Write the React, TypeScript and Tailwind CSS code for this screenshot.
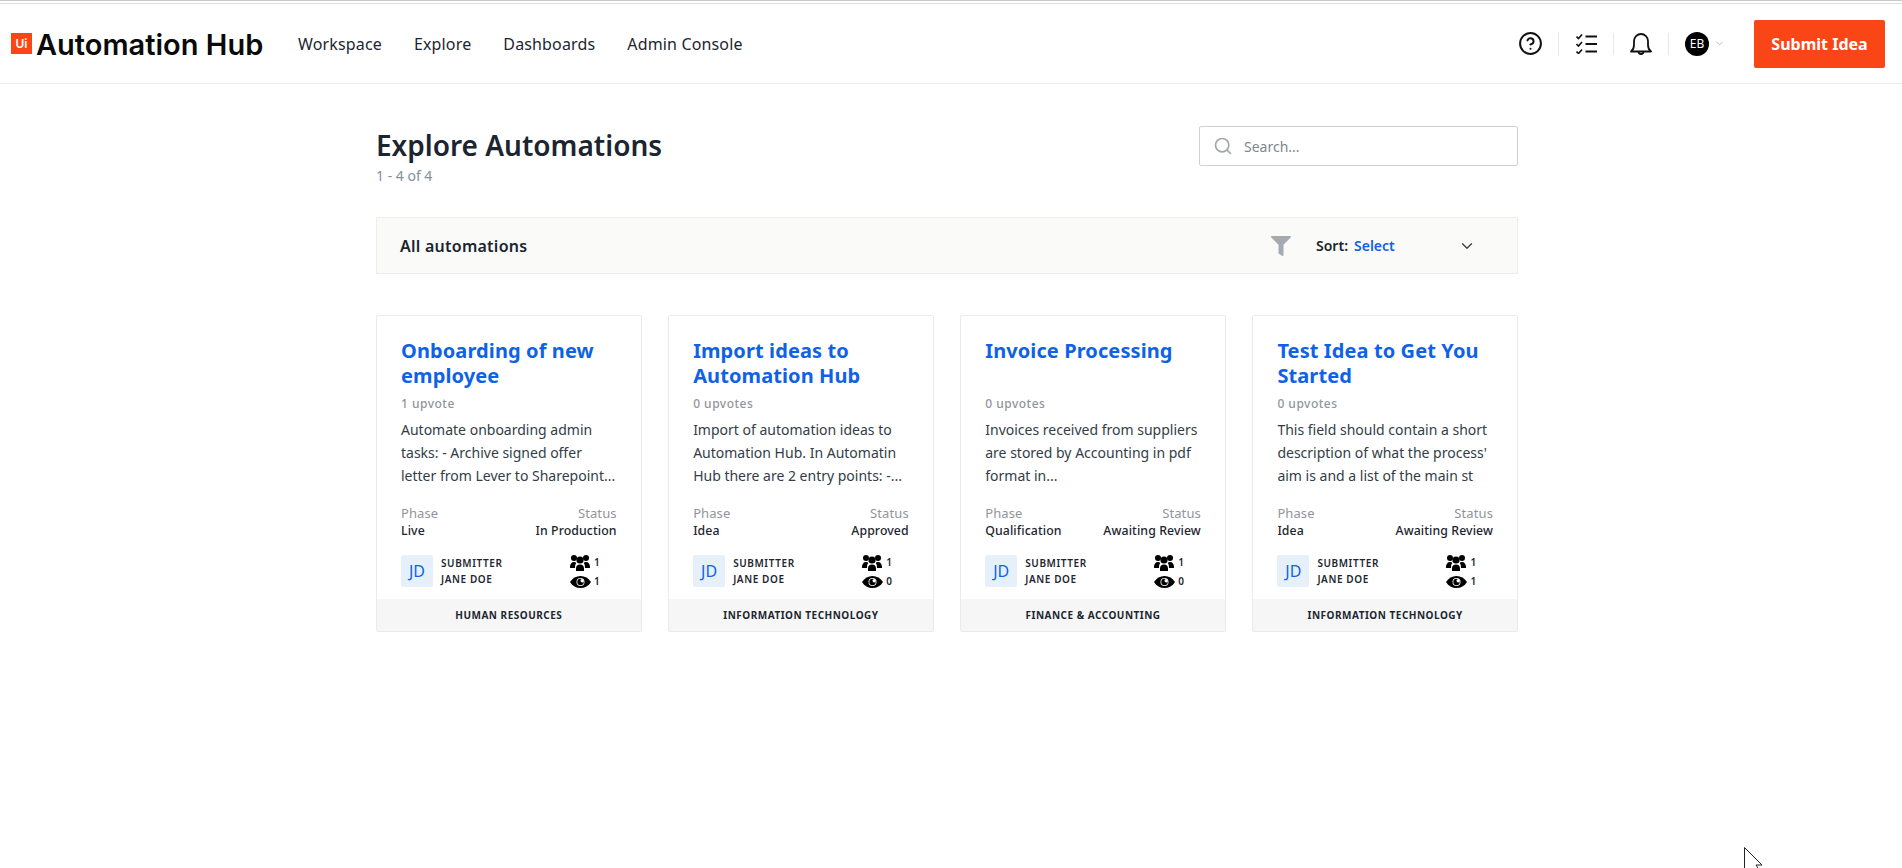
import { ChevronDown, CircleHelp, Search } from "lucide-react"
import { FaFilter } from "react-icons/fa"

interface Automation {
  title: string
  upvotes: string
  lines: string[]
  phase: string
  status: string
  users: number
  views: number
  category: string
}

const automations: Automation[] = [
  {
    title: "Onboarding of new employee",
    upvotes: "1 upvote",
    lines: ["Automate onboarding admin", "tasks: - Archive signed offer", "letter from Lever to Sharepoint..."],
    phase: "Live",
    status: "In Production",
    users: 1,
    views: 1,
    category: "HUMAN RESOURCES",
  },
  {
    title: "Import ideas to Automation Hub",
    upvotes: "0 upvotes",
    lines: ["Import of automation ideas to", "Automation Hub. In Automatin", "Hub there are 2 entry points: -..."],
    phase: "Idea",
    status: "Approved",
    users: 1,
    views: 0,
    category: "INFORMATION TECHNOLOGY",
  },
  {
    title: "Invoice Processing",
    upvotes: "0 upvotes",
    lines: ["Invoices received from suppliers", "are stored by Accounting in pdf", "format in..."],
    phase: "Qualification",
    status: "Awaiting Review",
    users: 1,
    views: 0,
    category: "FINANCE & ACCOUNTING",
  },
  {
    title: "Test Idea to Get You Started",
    upvotes: "0 upvotes",
    lines: ["This field should contain a short", "description of what the process'", "aim is and a list of the main st"],
    phase: "Idea",
    status: "Awaiting Review",
    users: 1,
    views: 1,
    category: "INFORMATION TECHNOLOGY",
  },
]

function ChecklistIcon() {
  return (
    <svg width="21" height="20" viewBox="0 0 21 20" fill="none" stroke="#111" strokeWidth="1.6">
      <path d="M0.500 2.500l2 2 3.500-4M0.500 10l2 2 3.500-4M0.500 17.500l2 2 3.500-4" />
      <path d="M9.500 2.500h11.500M9.500 10h11.500M9.500 17.500h11.500" strokeWidth="2" />
    </svg>
  )
}

function BellIcon() {
  return (
    <svg width="22" height="22" viewBox="0 0 22 22" fill="none" stroke="#111" strokeWidth="1.8">
      <path d="M1 18.500c2-1.500 3-3.500 3-6.500V8a7 7 0 0 1 14 0v4c0 3 1 5 3 6.500z" strokeLinejoin="round" />
      <path d="M8.500 18.500a2.500 2.500 0 0 0 5 0" />
    </svg>
  )
}

function UsersIcon() {
  return (
    <svg width="20" height="16" viewBox="0 0 20 16" fill="#000">
      <circle cx="4" cy="3" r="3" />
      <circle cx="16" cy="3" r="3" />
      <circle cx="10" cy="5" r="3.600" />
      <path d="M0 12c0-3 1.500-5 4-5 1 0 1.700.3 2.300.8C5.500 9 5 10.500 5 13H0zM20 12c0-3-1.500-5-4-5-1 0-1.700.3-2.300.8.800 1.200 1.300 2.700 1.300 5.200h5zM6 16v-2.500C6 11 7.500 9.500 10 9.500s4 1.500 4 4V16H6z" />
    </svg>
  )
}

function EyeIcon() {
  return (
    <svg width="21" height="12" viewBox="0 0 21 12">
      <path d="M0 6C2.500 2 6.200 0 10.500 0S18.500 2 21 6c-2.500 4-6.200 6-10.500 6S2.500 10 0 6z" fill="#000" />
      <circle cx="10.500" cy="6" r="4" fill="#fff" />
      <circle cx="10.500" cy="6" r="3.200" fill="#000" />
      <circle cx="12.200" cy="4.700" r="1.700" fill="#fff" />
    </svg>
  )
}

function Header() {
  return (
    <header className="flex h-[80px] items-center justify-between border-b border-[#ebebeb] pl-[11px] pr-[17px]">
      <div className="flex items-center">
        <div className="flex h-[21px] w-[21px] items-center justify-center bg-[#fa4616] font-['Inter',sans-serif] text-[12px] font-semibold text-white">
          Ui
        </div>
        <span className="ml-[4px] mt-[2px] w-[262px] font-['Inter',sans-serif] text-[29px] font-semibold leading-none tracking-[0px] text-[#0a0a0a]">
          Automation Hub
        </span>
        <nav className="flex gap-[32px] text-[16px] tracking-[0.15px] text-[#1d2630]">
          <a>Workspace</a>
          <a>Explore</a>
          <a>Dashboards</a>
          <a>Admin Console</a>
        </nav>
      </div>
      <div className="flex items-center">
        <div className="flex h-[22px] w-[56px] items-center justify-center border-r border-[#e8e8e8]">
          <CircleHelp size={25} strokeWidth={1.9} color="#111" />
        </div>
        <div className="flex h-[22px] w-[55px] items-center justify-center border-r border-[#e8e8e8]">
          <ChecklistIcon />
        </div>
        <div className="flex h-[22px] w-[55px] items-center justify-center border-r border-[#e8e8e8]">
          <BellIcon />
        </div>
        <div className="ml-[16px] flex h-[24px] w-[24px] items-center justify-center rounded-full bg-black text-[12px] text-white">
          EB
        </div>
        <ChevronDown size={11} color="#b5b5b5" className="ml-[5px]" />
        <button className="ml-[29px] h-[48px] w-[131px] rounded-[2px] bg-[#fa4616] text-[16px] font-bold text-white">
          Submit Idea
        </button>
      </div>
    </header>
  )
}

function Card({ item }: { item: Automation }) {
  return (
    <div className="flex h-[317px] flex-col rounded-[2px] border border-[#ebebeb] bg-white">
      <div className="flex-1 px-[24px] pt-[23px]">
        <h3 className="h-[50px] text-[20px] font-bold leading-[24.5px] tracking-[0.1px] text-[#0f62e6]">{item.title}</h3>
        <p className="mt-[7px] text-[12px] font-medium leading-[16px] tracking-[0.5px] text-[#8f959b]">{item.upvotes}</p>
        <div className="mt-[6px] text-[14px] leading-[23px] text-[#333d47]">
          {item.lines.map((line) => (
            <p key={line} className="whitespace-nowrap">{line}</p>
          ))}
        </div>
        <div className="mt-[18px] flex justify-between text-[13px] leading-[17px] tracking-[0.1px]">
          <div>
            <p className="text-[#8f959b]">Phase</p>
            <p className="text-[12.3px] font-medium text-[#1d2630]">{item.phase}</p>
          </div>
          <div className="text-right">
            <p className="text-[#8f959b]">Status</p>
            <p className="text-[12.3px] font-medium text-[#1d2630]">{item.status}</p>
          </div>
        </div>
        <div className="mt-[16px] flex">
          <div className="flex h-[32px] w-[32px] items-center justify-center rounded-[2px] bg-[#e6f0fb] text-[16px] text-[#0f62e6]">
            JD
          </div>
          <div className="ml-[8px] w-[129px] text-[10px] font-semibold leading-[16px] tracking-[0.6px] text-[#1d2630]">
            <p>SUBMITTER</p>
            <p>JANE DOE</p>
          </div>
          <div className="-mt-[1px] text-[10px] font-semibold leading-[17px] text-[#1d2630]">
            <div className="flex items-center gap-[4px]">
              <UsersIcon />
              <span>{item.users}</span>
            </div>
            <div className="mt-[2px] flex items-center gap-[3px]">
              <EyeIcon />
              <span>{item.views}</span>
            </div>
          </div>
        </div>
      </div>
      <div className="flex h-[32px] items-center justify-center bg-[#f6f6f6] text-[10px] font-bold tracking-[0.5px] text-[#1d2630]">
        {item.category}
      </div>
    </div>
  )
}

export default function App() {
  return (
    <div className="relative h-[868px] overflow-hidden bg-white font-['Noto_Sans',sans-serif]">
      <div className="h-[1px] bg-[#c9c9c9]" />
      <div className="mt-[2px] h-[1px] bg-[#dedede]" />
      <Header />
      <main className="ml-[376px] w-[1142px]">
        <div className="flex justify-between pt-[42px]">
          <div>
            <h1 className="text-[28px] font-semibold leading-[38px] text-[#1b2530]">Explore Automations</h1>
            <p className="mt-[3px] text-[14px] leading-[18px] text-[#82909b]">1 - 4 of 4</p>
          </div>
          <div className="flex h-[40px] w-[319px] items-center rounded-[2px] border border-[#cfd2d4] pl-[13px]">
            <Search size={20} color="#a1a8ad" strokeWidth={2} />
            <span className="ml-[11px] text-[14px] text-[#7f878d]">Search...</span>
          </div>
        </div>
        <div className="mt-[32px] flex h-[57px] items-center border border-[#ededed] bg-[#fafaf8] pl-[23px] pr-[41px]">
          <span className="flex-1 text-[16px] font-semibold tracking-[0.25px] text-[#1b2530]">All automations</span>
          <FaFilter size={20} color="#a3abb1" />
          <span className="ml-[25px] text-[14px] font-semibold text-[#1b2530]">Sort:</span>
          <span className="ml-[6px] w-[104px] text-[14px] font-semibold text-[#0f62e6]">Select</span>
          <ChevronDown size={18} strokeWidth={1.8} color="#444" />
        </div>
        <div className="mt-[41px] grid grid-cols-4 gap-[26.5px]">
          {automations.map((item) => (
            <Card key={item.title} item={item} />
          ))}
        </div>
      </main>
      <svg className="absolute left-[1744px] top-[847px]" width="20" height="21" viewBox="0 0 20 21" fill="#fff" stroke="#222">
        <path d="M0.5 0.5V21M0.5 0.5L18 18H12L14 21" />
      </svg>
    </div>
  )
}
